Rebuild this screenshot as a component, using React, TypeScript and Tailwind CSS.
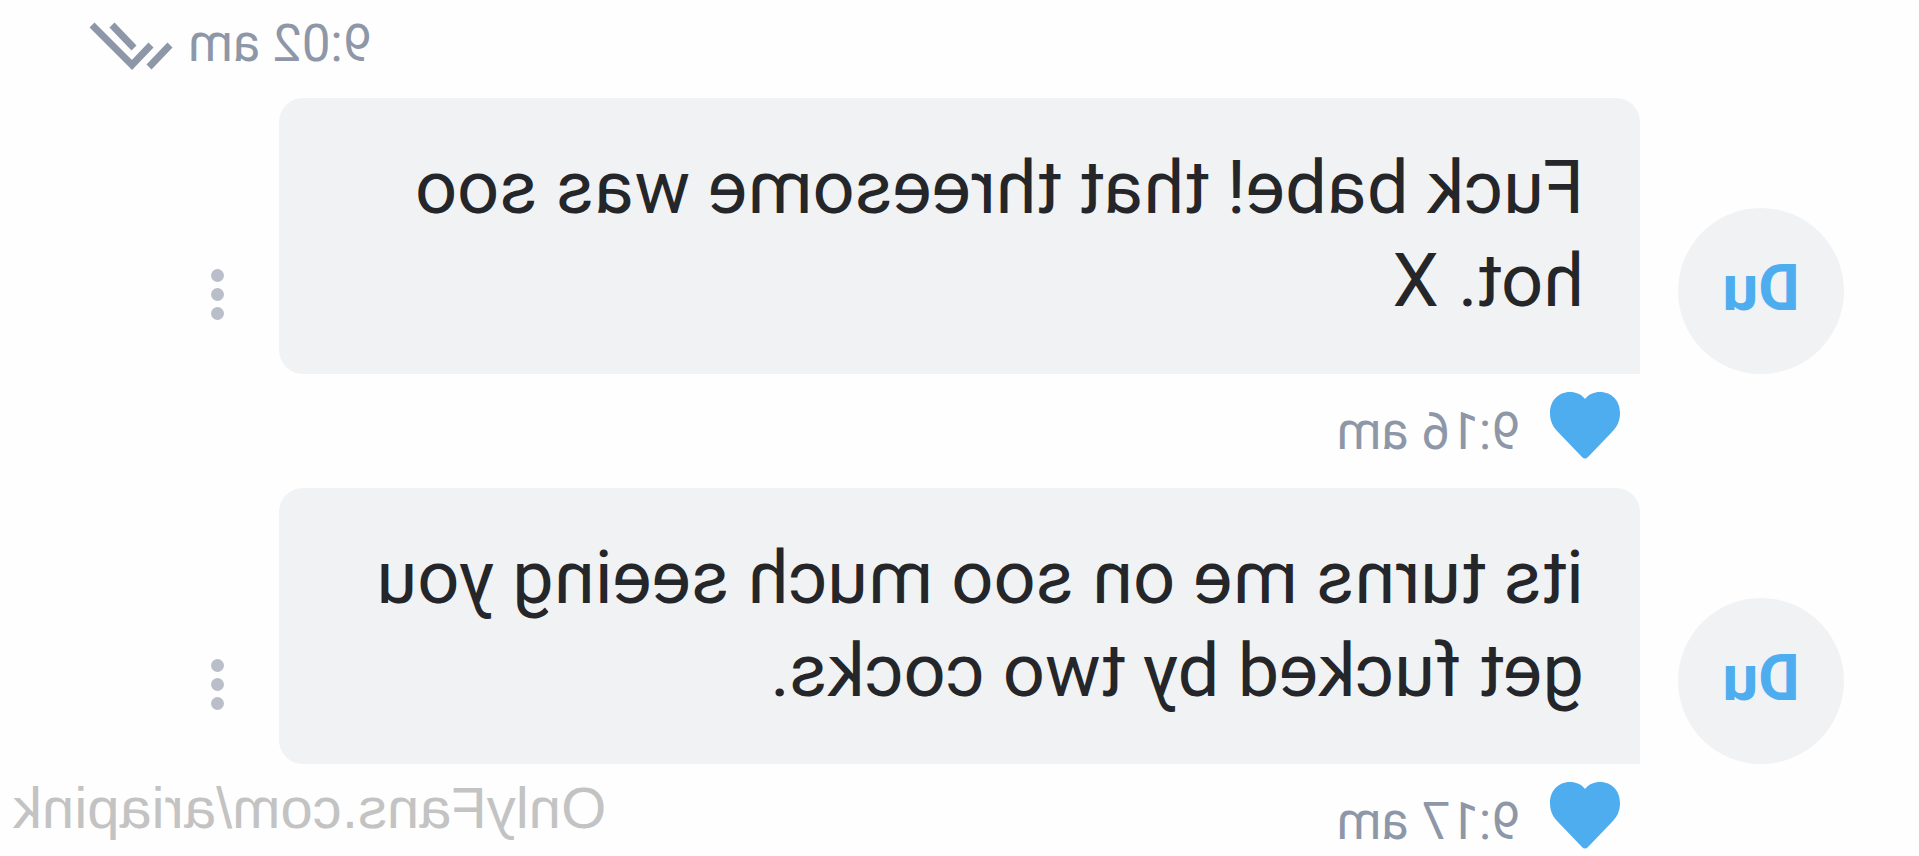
interface Message {
  id: number;
  initials: string;
  text: string;
  time: string;
}

const messages: Message[] = [
  { id: 1, initials: 'Du', text: 'Fuck babe! that threesome was soo hot. X', time: '9:16 am' },
  { id: 2, initials: 'Du', text: 'its turns me on soo much seeing you get fucked by two cocks.', time: '9:17 am' },
];

function DoubleCheck() {
  return (
    <svg
      className="w-[86px] h-12 shrink-0"
      viewBox="0 0 86 48"
      fill="none"
      stroke="currentColor"
      strokeWidth="7"
      aria-hidden="true"
    >
      <path d="M23 23L42 43L82 3" />
      <path d="M4 23L25 45" />
      <path d="M40 26L62 3" />
    </svg>
  );
}

function Heart() {
  return (
    <svg className="w-[70px] h-[68px]" viewBox="0 0 70 68" fill="currentColor" aria-hidden="true">
      <path d="M35 7C31 2 26 0 20 0C8 0 0 9 0 21C0 29 3 35 8 40L32 65Q35 68 38 65L62 40C67 35 70 29 70 21C70 9 62 0 50 0C44 0 39 2 35 7Z" />
    </svg>
  );
}

function MessageItem({ message }: { message: Message }) {
  return (
    <article>
      <div className="flex items-end">
        <div className="w-[166px] h-[166px] mr-[38px] shrink-0 rounded-full bg-[#f1f2f4] flex items-center justify-center text-[64px] leading-[72px] pb-1 font-bold text-[#4eadee]">
          {message.initials}
        </div>
        <p className="flex-1 rounded-3xl rounded-bl-none bg-[#f1f2f4] px-14 pt-[43px] pb-[47px] text-[74px] leading-[93px] text-[#242629]">
          {message.text}
        </p>
        <button
          type="button"
          aria-label="Message options"
          className="w-[122px] h-[160px] shrink-0 flex flex-col items-center justify-center gap-1.5 text-[#b9bec9]"
        >
          <span className="w-[13px] h-[13px] rounded-full bg-current" />
          <span className="w-[13px] h-[13px] rounded-full bg-current" />
          <span className="w-[13px] h-[13px] rounded-full bg-current" />
        </button>
      </div>
      <div className="h-[92px] pl-[224px] pt-[18px] flex items-start gap-[30px]">
        <button type="button" aria-label="Like" className="text-[#4eadee]">
          <Heart />
        </button>
        <time className="pt-[10px] text-[51px] leading-[60px] text-[#8e97a8]">{message.time}</time>
      </div>
    </article>
  );
}

export default function App() {
  return (
    <div className="relative min-h-screen bg-[#fefefe] font-['Roboto','Liberation_Sans',sans-serif] -scale-x-100">
      <header className="h-[98px] pt-[14px] pr-[88px] flex items-start justify-end gap-[14px] text-[#8e97a8]">
        <time className="text-[51px] leading-[60px]">9:02 am</time>
        <span className="pt-2">
          <DoubleCheck />
        </span>
      </header>
      <main className="pl-[75px] pr-[157px] flex flex-col gap-[22px]">
        {messages.map((message) => (
          <MessageItem key={message.id} message={message} />
        ))}
      </main>
      <a
        href="#ariapink"
        className="absolute right-[13px] bottom-4 text-[58px] leading-[64px] font-['Liberation_Sans',Arial,sans-serif] text-[#c3c3c3]"
      >
        OnlyFans.com/ariapink
      </a>
    </div>
  );
}
